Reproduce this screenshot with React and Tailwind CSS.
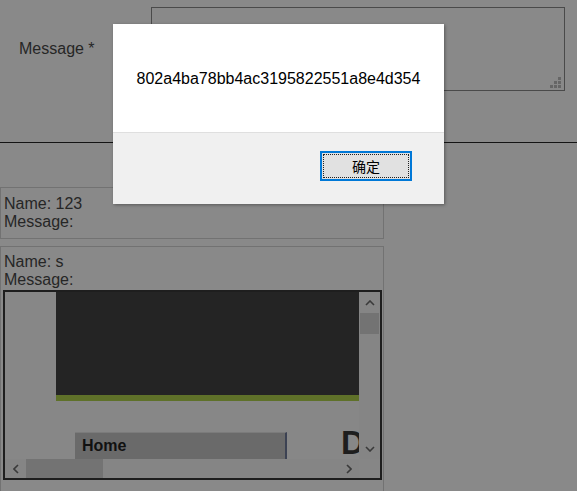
import React from 'react';

const Grip = () => (
  <svg className="absolute right-[3px] bottom-[2px]" width="11" height="11" viewBox="0 0 11 11">
    <rect x="8" y="0" width="3" height="3" fill="#666" />
    <rect x="4" y="4" width="3" height="3" fill="#666" />
    <rect x="8" y="4" width="3" height="3" fill="#666" />
    <rect x="0" y="8" width="3" height="3" fill="#666" />
    <rect x="4" y="8" width="3" height="3" fill="#666" />
    <rect x="8" y="8" width="3" height="3" fill="#666" />
  </svg>
);

const Chevron = ({ dir }) => {
  const paths = {
    up: 'M1 5 L5 1 L9 5',
    down: 'M1 1 L5 5 L9 1',
    left: 'M5 1 L1 5 L5 9',
    right: 'M1 1 L5 5 L1 9',
  };
  const vertical = dir === 'up' || dir === 'down';
  return (
    <svg width={vertical ? 10 : 6} height={vertical ? 6 : 10} viewBox={vertical ? '0 0 10 6' : '0 0 6 10'}>
      <path d={paths[dir]} fill="none" stroke="#3a3a3a" strokeWidth="1.6" />
    </svg>
  );
};

const FramePreview = () => (
  <div className="ml-[-1px] mt-px w-[379px] h-[190px] border-2 border-[#1e1e1e] flex flex-col">
    <div className="flex h-[167px] shrink-0">
      <div className="w-[354px] h-[167px] shrink-0 overflow-hidden flex bg-[#878787]">
        <div className="w-[51px] shrink-0" />
        <div className="w-[303px] shrink-0 flex flex-col">
          <div className="h-[103px] shrink-0 bg-[#242424]" />
          <div className="h-[6px] shrink-0 bg-[#5f7129]" />
          <div className="flex items-start mt-[31px] shrink-0">
            <div className="ml-[19px] w-[212px] h-[40px] shrink-0 bg-[#6a6a6a] border-t border-[#7b7b7b] border-r-2 border-r-[#3c4253] pl-[7px] pt-[4px] font-bold text-[#111] leading-[18px]">
              Home
            </div>
            <div className="ml-[54px] mt-[-6px] shrink-0 text-[33px] font-bold leading-[33px] text-[#1e1e1e]">D</div>
          </div>
        </div>
      </div>
      <div className="w-[21px] h-[167px] shrink-0 bg-[#858585] flex flex-col items-center">
        <div className="h-[21px] flex items-center justify-center"><Chevron dir="up" /></div>
        <div className="w-[19px] h-[21px] bg-[#737373]" />
        <div className="flex-1" />
        <div className="h-[20px] flex items-center justify-center"><Chevron dir="down" /></div>
      </div>
    </div>
    <div className="flex h-[19px] shrink-0">
      <div className="w-[354px] shrink-0 bg-[#858585] flex items-center">
        <div className="w-[21px] flex justify-center"><Chevron dir="left" /></div>
        <div className="w-[77px] h-[19px] bg-[#737373]" />
        <div className="flex-1" />
        <div className="w-[21px] flex justify-center"><Chevron dir="right" /></div>
      </div>
      <div className="w-[21px] shrink-0 bg-[#868686]" />
    </div>
  </div>
);

export default function App() {
  return (
    <div className="relative w-[577px] h-[491px] overflow-hidden bg-[#898989] text-[16px] text-[#262626] font-['Liberation_Sans',Arial,sans-serif]">
      <div className="flex items-center pt-[7px]">
        <div className="w-[151px] pl-[19px]">Message *</div>
        <div className="relative w-[414px] h-[84px] border border-[#4a4a4a]">
          <Grip />
        </div>
      </div>
      <div className="mt-[51px] h-px bg-[#141414]" />

      <div className="mt-[44px] w-[384px] flex flex-col gap-[7px] leading-[18px]">
        <div className="border border-[#727272] pl-[3px] pt-[7px] pb-[7px]">
          <div>Name: 123</div>
          <div>Message:</div>
        </div>
        <div className="border border-[#727272] pl-[3px] pt-[6px] pb-[20px]">
          <div>Name: s</div>
          <div>Message:</div>
          <FramePreview />
        </div>
      </div>

      <div className="absolute left-[113px] top-[24px] w-[331px] h-[180px] bg-[#f0f0f0] shadow-[1px_1px_3px_rgba(0,0,0,0.35)] flex flex-col">
        <div className="h-[109px] bg-white border-b border-[#dfdfdf] flex items-center justify-center pt-[2px] text-[16px] text-black">
          802a4ba78bb4ac3195822551a8e4d354
        </div>
        <div className="flex justify-end pt-[18px] pr-[32px]">
          <button className="w-[92px] h-[30px] border-2 border-[#0078d7] bg-[#e1e1e1] p-px">
            <div className="w-full h-full border border-dotted border-[#222] flex items-center justify-center text-[14px] text-black font-['Noto_Sans_CJK_SC',sans-serif]">
              确定
            </div>
          </button>
        </div>
      </div>
    </div>
  );
}
